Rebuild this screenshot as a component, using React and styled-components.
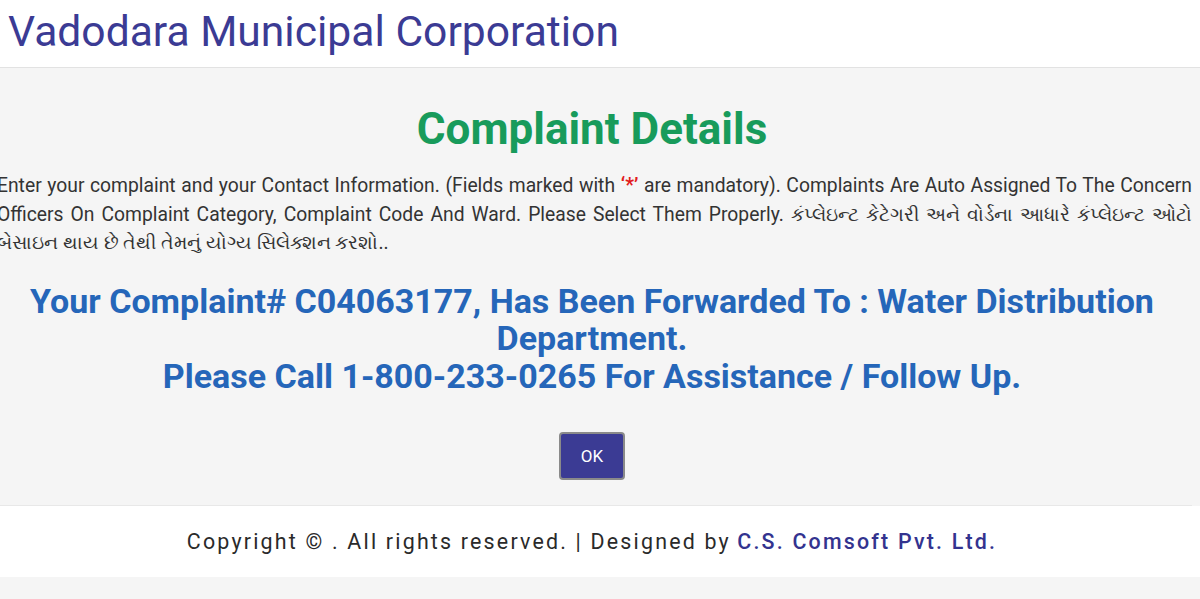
import React from "react";
import styled, { createGlobalStyle } from "styled-components";

const Global = createGlobalStyle`
  html, body { margin: 0; padding: 0; background: #f5f5f5; overflow: hidden; }
  body { font-family: Roboto, "Noto Sans", sans-serif; }
`;

const Header = styled.header`
  background: #ffffff;
  height: 67px;
  border-bottom: 1px solid #e2e2e2;
  display: flex;
  align-items: center;
  padding-left: 8px;
`;

const Brand = styled.h1`
  margin: 0;
  font-family: Roboto, sans-serif;
  font-weight: 400;
  font-size: 42.6px;
  color: #3b3b94;
  line-height: 1;
  transform: translateY(-2px);
`;

const Main = styled.main`
  background: #f5f5f5;
  height: 437px;
  border-bottom: 1px solid #e8e8e8;
  margin: 0 8px 0 -8px;
  display: flex;
  flex-direction: column;
  align-items: center;
`;

const Title = styled.h2`
  margin: 36px 0 0;
  font-family: Roboto, sans-serif;
  font-weight: 700;
  font-size: 44px;
  line-height: 50px;
  color: #189b5b;
`;

const Intro = styled.p`
  margin: 18px 0 0;
  align-self: stretch;
  padding-left: 5px;
  font-family: Roboto, "Noto Sans", sans-serif;
  font-size: 19.3px;
  line-height: 28.6px;
  color: #333333;
  text-align: justify;
`;

const Star = styled.span`
  color: #e21b1b;
  font-weight: 700;
`;

const Notice = styled.div`
  margin-top: 25px;
  width: 1170px;
  text-align: center;
  font-family: Roboto, sans-serif;
  font-weight: 700;
  font-size: 34px;
  line-height: 37.6px;
  color: #2566b9;
`;

const OkButton = styled.button`
  margin-top: 36px;
  width: 66px;
  height: 48px;
  background: #3b3b94;
  color: #ffffff;
  border: 2px solid #8a8a8a;
  border-radius: 4px;
  font-family: Roboto, sans-serif;
  font-size: 17px;
  cursor: pointer;
`;

const Footer = styled.footer`
  background: #ffffff;
  height: 71px;
  display: flex;
  align-items: center;
  justify-content: center;
  padding-right: 16px;
  font-family: Roboto, sans-serif;
  font-size: 21.4px;
  letter-spacing: 2.2px;
  color: #2a2a2a;
`;

const Company = styled.span`
  color: #33338f;
  font-weight: 500;
  margin-left: 0.3em;
`;

export default function App() {
  return (
    <>
      <Global />
      <Header>
        <Brand>Vadodara Municipal Corporation</Brand>
      </Header>
      <Main>
        <Title>Complaint Details</Title>
        <Intro>
          Enter your complaint and your Contact Information. (Fields marked with{" "}
          <Star>‘*’</Star> are mandatory). Complaints Are Auto Assigned To The Concern
          Officers On Complaint Category, Complaint Code And Ward. Please Select Them
          Properly. કંપ્લેઇન્ટ કેટેગરી અને વોર્ડના આધારે કંપ્લેઇન્ટ ઓટો બેસાઇન થાય છે તેથી
          તેમનું યોગ્ય સિલેક્શન કરશો..
        </Intro>
        <Notice>
          Your Complaint# C04063177, Has Been Forwarded To : Water Distribution
          Department.
          <br />
          Please Call 1-800-233-0265 For Assistance / Follow Up.
        </Notice>
        <OkButton>OK</OkButton>
      </Main>
      <Footer>
        Copyright © . All rights reserved. | Designed by
        <Company>C.S. Comsoft Pvt. Ltd.</Company>
      </Footer>
    </>
  );
}
